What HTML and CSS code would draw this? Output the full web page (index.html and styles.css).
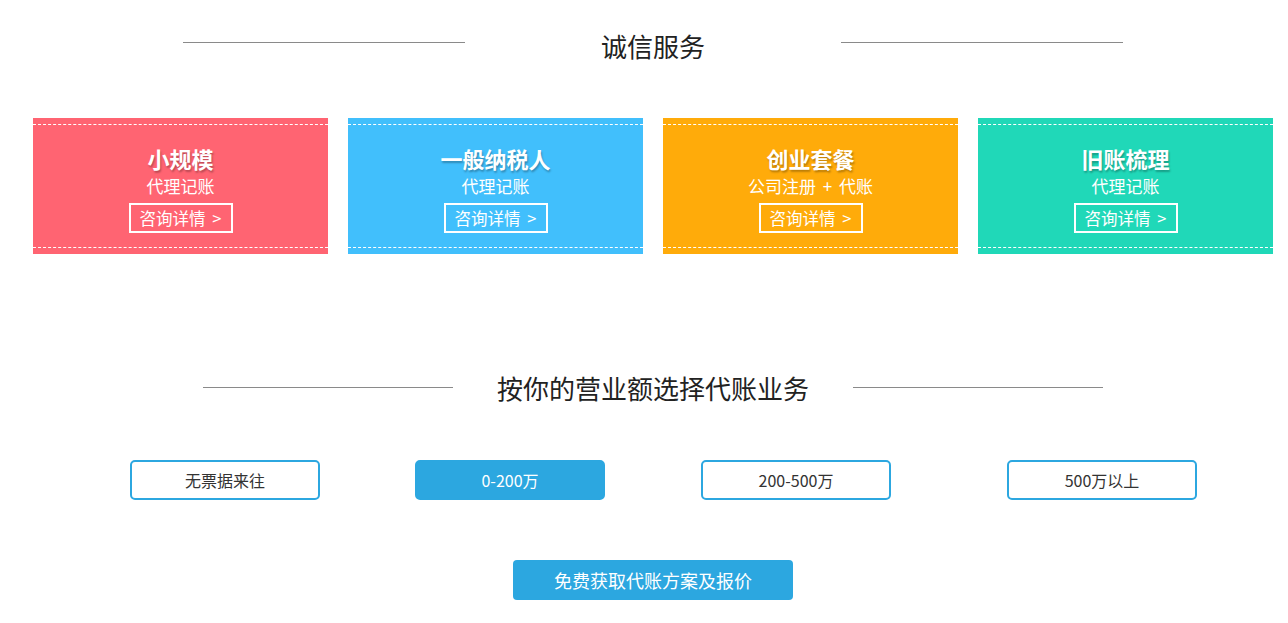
FILE: index.html
```html
<!DOCTYPE html>
<html lang="zh-CN">
<head>
<meta charset="utf-8">
<title>诚信服务</title>
<link rel="stylesheet" href="styles.css">
</head>
<body>
<div class="page">
  <div class="section-title title-one">
    <span class="title-line"></span>
    <h2 class="title-text">诚信服务</h2>
    <span class="title-line"></span>
  </div>

  <div class="cards">
    <div class="card card-pink">
      <div class="card-inner">
        <div class="card-title">小规模</div>
        <div class="card-sub">代理记账</div>
        <a class="card-btn" href="#">咨询详情 &gt;</a>
      </div>
    </div>
    <div class="card card-blue">
      <div class="card-inner">
        <div class="card-title">一般纳税人</div>
        <div class="card-sub">代理记账</div>
        <a class="card-btn" href="#">咨询详情 &gt;</a>
      </div>
    </div>
    <div class="card card-orange">
      <div class="card-inner">
        <div class="card-title">创业套餐</div>
        <div class="card-sub">公司注册 + 代账</div>
        <a class="card-btn" href="#">咨询详情 &gt;</a>
      </div>
    </div>
    <div class="card card-teal">
      <div class="card-inner">
        <div class="card-title">旧账梳理</div>
        <div class="card-sub">代理记账</div>
        <a class="card-btn" href="#">咨询详情 &gt;</a>
      </div>
    </div>
  </div>

  <div class="section-title title-two">
    <span class="title-line"></span>
    <h2 class="title-text">按你的营业额选择代账业务</h2>
    <span class="title-line"></span>
  </div>

  <div class="filters">
    <a class="filter f1" href="#">无票据来往</a>
    <a class="filter f2 active" href="#">0-200万</a>
    <a class="filter f3" href="#">200-500万</a>
    <a class="filter f4" href="#">500万以上</a>
  </div>

  <div class="cta-row">
    <a class="cta" href="#">免费获取代账方案及报价</a>
  </div>
</div>
</body>
</html>
```

FILE: styles.css
```css
* { box-sizing: border-box; }

body {
  margin: 0;
  background: #fff;
  font-family: "Noto Sans CJK SC", "Noto Sans", sans-serif;
  color: #222;
}

a { text-decoration: none; }

.page {
  width: 1240px;
  margin-left: 33px;
}

.section-title {
  display: flex;
  align-items: center;
  justify-content: center;
}

.title-text {
  margin: 0;
  font-size: 26px;
  font-weight: normal;
  line-height: 36px;
  color: #222;
}

.title-line {
  height: 1px;
  background: #8a8a8a;
  margin-bottom: 8px;
}

.title-one {
  margin-top: 28px;
  gap: 136px;
}
.title-one .title-line { width: 282px; }

.title-two {
  margin-top: 116px;
  gap: 44px;
}
.title-two .title-line { width: 250px; margin-bottom: 2px; }

.cards {
  display: flex;
  gap: 20px;
  margin-top: 54px;
}

.card {
  width: 295px;
  height: 136px;
  padding: 6px 0;
}

.card-pink { background: #ff6472; }
.card-blue { background: #41bffc; }
.card-orange { background: #ffab0a; }
.card-teal { background: #20d8b8; }

.card-inner {
  border-top: 1px dashed #fff;
  border-bottom: 1px dashed #fff;
  padding: 21px 0 14px;
  display: flex;
  flex-direction: column;
  align-items: center;
  color: #fff;
}

.card-title {
  font-size: 22px;
  font-weight: bold;
  line-height: 24px;
  text-shadow: 1px 2px 2px rgba(0, 0, 0, 0.28);
}

.card-sub {
  margin-top: 5px;
  font-size: 17px;
  line-height: 22px;
  word-spacing: 3px;
}

.card-btn {
  margin-top: 6px;
  width: 104px;
  height: 30px;
  border: 2px solid #fff;
  color: #fff;
  font-size: 16.5px;
  line-height: 26px;
  text-align: center;
  word-spacing: 3px;
}

.filters {
  display: flex;
  margin-top: 54px;
}

.filter {
  width: 190px;
  height: 40px;
  border: 2px solid #2ca7e0;
  border-radius: 5px;
  color: #333;
  font-size: 16px;
  line-height: 36px;
  text-align: center;
}

.f1 { margin-left: 97px; }
.f2 { margin-left: 95px; }
.f3 { margin-left: 96px; }
.f4 { margin-left: 116px; }

.filter.active {
  background: #2ca7e0;
  color: #fff;
}

.cta-row {
  display: flex;
  justify-content: center;
  margin-top: 60px;
}

.cta {
  width: 280px;
  height: 40px;
  background: #2ca7e0;
  border-radius: 4px;
  color: #fff;
  font-size: 18px;
  line-height: 40px;
  text-align: center;
}
```
